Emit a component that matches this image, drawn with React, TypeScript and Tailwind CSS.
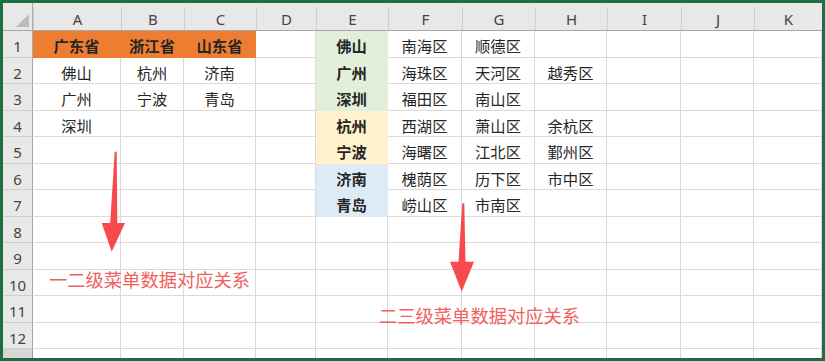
import React from "react";

const COLS = ["A", "B", "C", "D", "E", "F", "G", "H", "I", "J", "K"];

type Fill = "orange" | "green" | "yellow" | "blue";
type Cell = { text: string; fill?: Fill; bold?: boolean };

const FILL: Record<Fill, string> = {
  orange: "bg-[#ed7d31] border-[#ed7d31]",
  green: "bg-[#e2efda] border-[#e2efda]",
  yellow: "bg-[#fff2cc] border-[#fff2cc]",
  blue: "bg-[#ddebf7] border-[#ddebf7]",
};

// row -> column index -> cell
const DATA: Record<number, Record<number, Cell>> = {
  1: {
    0: { text: "广东省", fill: "orange", bold: true },
    1: { text: "浙江省", fill: "orange", bold: true },
    2: { text: "山东省", fill: "orange", bold: true },
    4: { text: "佛山", fill: "green", bold: true },
    5: { text: "南海区" },
    6: { text: "顺德区" },
  },
  2: {
    0: { text: "佛山" },
    1: { text: "杭州" },
    2: { text: "济南" },
    4: { text: "广州", fill: "green", bold: true },
    5: { text: "海珠区" },
    6: { text: "天河区" },
    7: { text: "越秀区" },
  },
  3: {
    0: { text: "广州" },
    1: { text: "宁波" },
    2: { text: "青岛" },
    4: { text: "深圳", fill: "green", bold: true },
    5: { text: "福田区" },
    6: { text: "南山区" },
  },
  4: {
    0: { text: "深圳" },
    4: { text: "杭州", fill: "yellow", bold: true },
    5: { text: "西湖区" },
    6: { text: "萧山区" },
    7: { text: "余杭区" },
  },
  5: {
    4: { text: "宁波", fill: "yellow", bold: true },
    5: { text: "海曙区" },
    6: { text: "江北区" },
    7: { text: "鄞州区" },
  },
  6: {
    4: { text: "济南", fill: "blue", bold: true },
    5: { text: "槐荫区" },
    6: { text: "历下区" },
    7: { text: "市中区" },
  },
  7: {
    4: { text: "青岛", fill: "blue", bold: true },
    5: { text: "崂山区" },
    6: { text: "市南区" },
  },
};

const ROWS = Array.from({ length: 12 }, (_, i) => i + 1);

const cjk = "font-['Noto_Sans_CJK_SC','Noto_Sans',sans-serif]";
const head = "font-['Noto_Sans','Liberation_Sans',sans-serif]";

export default function App() {
  return (
    <div className="relative w-[825px] h-[361px] bg-white border-[3px] border-[#1f6e43] overflow-hidden">
      <div
        className={`grid grid-cols-[30px_88px_63px_72px_60px_72px_74px_73px_72px_74px_73px_68px] grid-rows-[28px_27px_26px_27px_26px_27px_26px_27px_26px_27px_26px_27px_26px_9px] ${cjk}`}
      >
        {/* corner */}
        <div className="bg-[#e8e8e8] border-r border-b border-[#a8a8a8] flex justify-end items-end pr-[3px] pb-[3px]">
          <svg width="13" height="13" viewBox="0 0 13 13">
            <polygon points="13,0 13,13 0,13" fill="#bdbdbd" />
          </svg>
        </div>

        {/* column headers */}
        {COLS.map((c) => (
          <div key={c} className="bg-[#e8e8e8] border-b border-[#a8a8a8] flex flex-col">
            <div className="h-[9px]" />
            <div
              className={`flex-1 border-l border-[#cfcfcf] first:border-l-0 flex items-center justify-center pt-[1px] text-[15px] text-[#444] ${head}`}
            >
              {c}
            </div>
          </div>
        ))}

        {/* rows */}
        {ROWS.map((r) => (
          <React.Fragment key={r}>
            <div
              className={`bg-[#e8e8e8] border-r border-[#a8a8a8] border-b border-b-[#cfcfcf] flex items-center justify-center pt-[5px] text-[15px] text-[#444] ${head}`}
            >
              {r}
            </div>
            {COLS.map((_, ci) => {
              const cell = DATA[r]?.[ci];
              const fill = cell?.fill ? FILL[cell.fill] : "border-[#dadada]";
              return (
                <div
                  key={ci}
                  className={`border-r border-b ${fill} flex items-center justify-center pt-[3px] text-[15.3px] text-[#262626] whitespace-nowrap ${
                    cell?.bold ? "font-bold" : ""
                  }`}
                >
                  {cell?.text}
                </div>
              );
            })}
          </React.Fragment>
        ))}

        {/* partially visible row 13 */}
        <div className="bg-[#d6d6d6] border-r border-[#9a9a9a]" />
        {COLS.map((c) => (
          <div key={c} className="border-r border-[#dadada]" />
        ))}
      </div>

      {/* annotations */}
      <svg
        className="absolute left-[-3px] top-[-3px] pointer-events-none"
        width="825"
        height="361"
        viewBox="0 0 825 361"
      >
        <polygon
          points="114.7,151.7 116.7,151.7 117.3,223 125,223 111.7,251.7 101.7,223 110.2,223"
          fill="#f84a4c"
        />
        <polygon
          points="462.3,203.3 464.3,203.3 465.5,261.7 474,261.7 461.7,291.7 450,261.7 458.5,261.7"
          fill="#f84a4c"
        />
      </svg>
      <div className={`absolute left-[46px] top-[265px] text-[18.3px] leading-[22px] text-[#f26060] whitespace-nowrap ${cjk}`}>
        一二级菜单数据对应关系
      </div>
      <div className={`absolute left-[376px] top-[301px] text-[18.3px] leading-[22px] text-[#f26060] whitespace-nowrap ${cjk}`}>
        二三级菜单数据对应关系
      </div>
    </div>
  );
}
